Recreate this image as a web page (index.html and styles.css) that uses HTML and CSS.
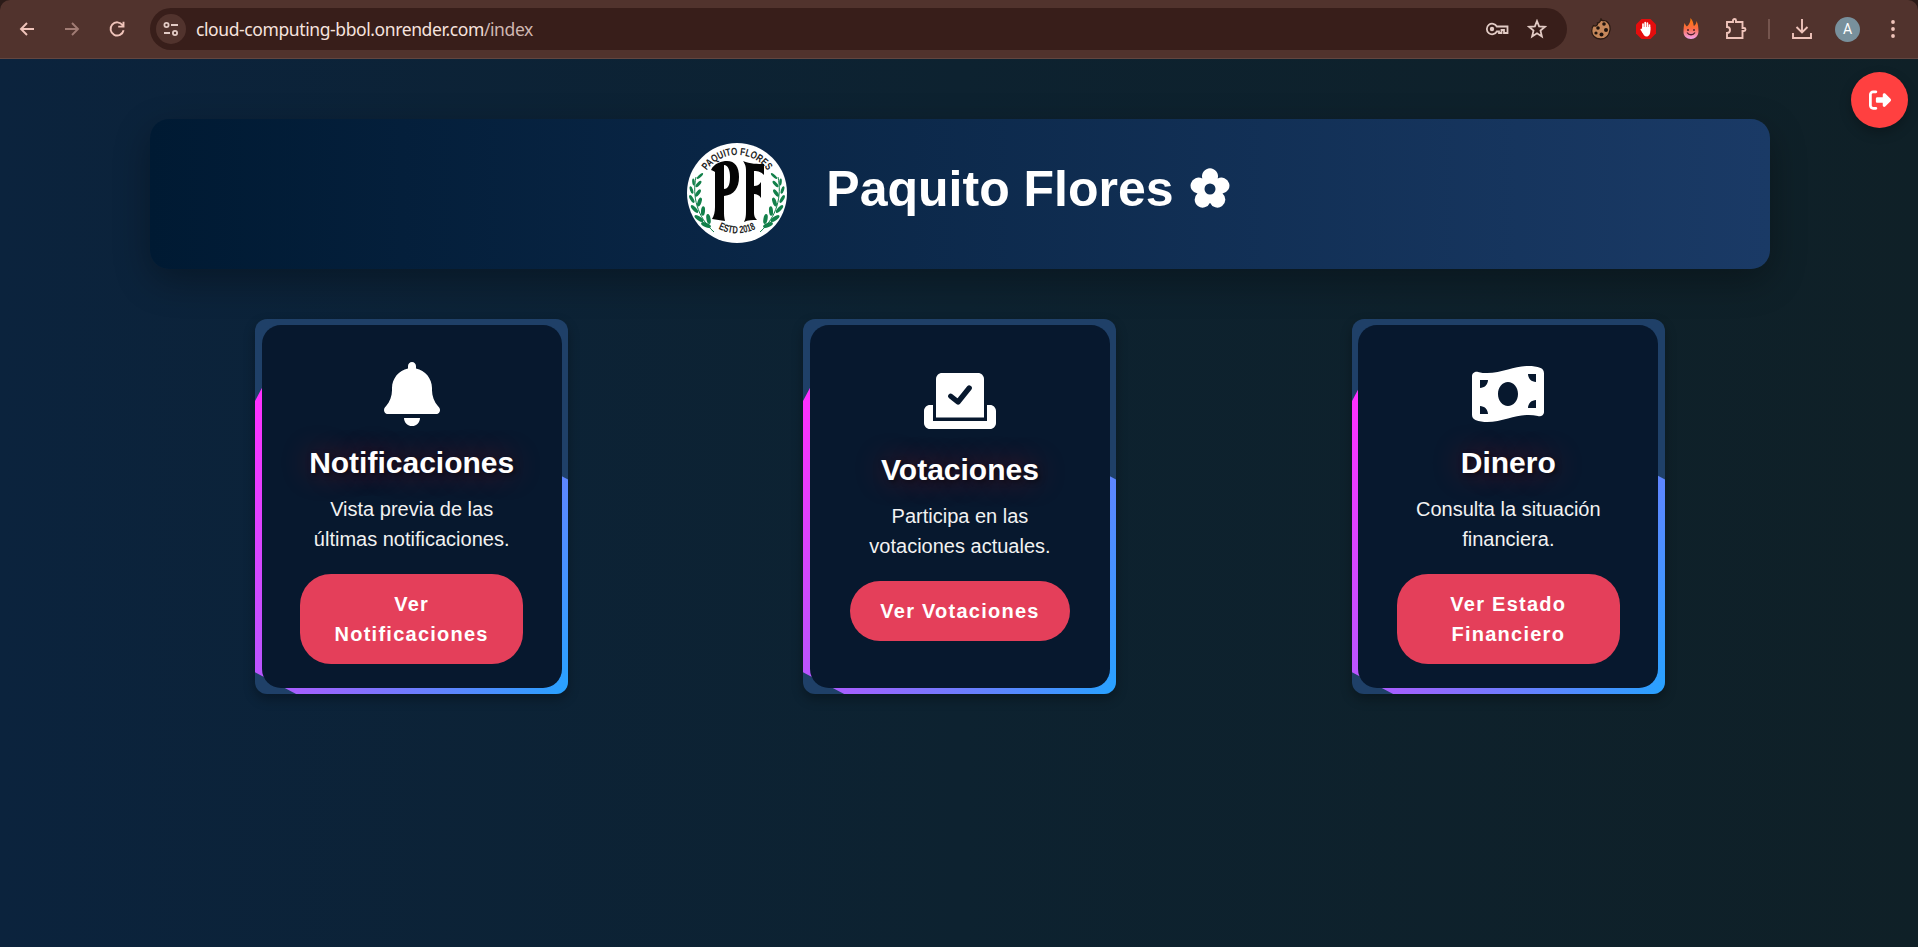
FILE: index.html
```html
<!DOCTYPE html>
<html lang="es">
<head>
<meta charset="utf-8">
<title>Paquito Flores</title>
<link rel="stylesheet" href="styles.css">
</head>
<body>
<div class="browser">
  <nav class="nav">
    <svg width="20" height="20" viewBox="0 0 20 20"><path d="M17 10H4M10 4L4 10L10 16"/></svg>
    <svg class="dim" width="20" height="20" viewBox="0 0 20 20"><path d="M3 10H16M10 4L16 10L10 16"/></svg>
    <svg width="20" height="20" viewBox="0 0 20 20"><path d="M15.600 6.200A6.600 6.600 0 1 0 16.600 11.300M16.500 2.800V7.600H11.200"/></svg>
  </nav>
  <div class="address">
    <span class="site"><svg width="18" height="18" viewBox="0 0 18 18"><circle cx="4.500" cy="5" r="2.100"/><path d="M9 5H16M2 13H8"/><circle cx="13" cy="13" r="2.100"/></svg></span>
    <span class="url">cloud-computing-bbol.onrender.com<span class="path">/index</span></span>
    <svg class="key" width="24" height="16" viewBox="0 0 24 16"><path d="M11.800 5.500H22.500V12H19V9H16.500V12H14V10.500H11.800A5.300 5.300 0 1 1 11.800 5.500Z"/><circle class="fill" cx="7" cy="8" r="2.200"/></svg>
    <svg class="star" width="20" height="20" viewBox="0 0 20 20"><path d="M10 2L12.100 7.400L18 7.800L13.500 11.600L14.900 17.400L10 14.200L5.100 17.400L6.500 11.600L2 7.800L7.900 7.400Z"/></svg>
  </div>
  <div class="tools">
    <svg width="20" height="22" viewBox="0 0 20 22"><path d="M10 1C11 4 13 2 15 3C18 5 19.500 8 19 12C18 18 14 21 9.500 21C4 21 .7 17 .7 13C.7 10 1 9 2.500 7.500C5 9 7 7 6.500 5C8 5 9.500 3 10 1Z" fill="#c4875a" stroke="#2b1a12" stroke-width="1.300"/><g fill="#1d120d" stroke="none"><circle cx="13" cy="6" r="1.800"/><circle cx="7" cy="10" r="1.800"/><circle cx="15" cy="12" r="2"/><circle cx="5" cy="15" r="1.600"/><circle cx="10.500" cy="16.500" r="2"/></g></svg>
    <svg width="22" height="22" viewBox="0 0 22 22"><path d="M6.500 1H15.500L21 6.500V15.500L15.500 21H6.500L1 15.500V6.500Z" fill="#e40d0d" stroke="none"/><path d="M8 11V6M10.200 10V4.500M12.400 10V5M14.500 12V7M6.300 11.500L8 14" stroke="#fff" stroke-width="1.700" stroke-linecap="round"/><path d="M7.200 9H15.300V13C15.300 16 14 18.500 11.500 18.500C9.500 18.500 8.200 16.500 7.200 14Z" fill="#fff" stroke="none"/></svg>
    <svg width="18" height="22" viewBox="0 0 18 22"><defs><linearGradient id="flame" x2="0" y2="1"><stop offset="0" stop-color="#ff7a00"/><stop offset=".5" stop-color="#fb6b45"/><stop offset="1" stop-color="#f5a3ef"/></linearGradient></defs><path d="M8.500 0C12 4 11 6.500 12 8C13.500 7 14.500 5 14.500 3C16 6 16.500 9 16.500 13.500C16.500 18 13 21 9 21C4.500 21 1.500 18 1.500 14C1.500 10 2 7 2.500 5C3.500 7 4 8 5 8.500C7.500 6 8.500 4 8.500 0Z" fill="url(#flame)" stroke="none"/><path d="M5 14.500C7 17.500 11 17.500 13 14.500" stroke="#4b202c" stroke-width="1.300"/><circle cx="6" cy="12" r="1" fill="#4b202c" stroke="none"/><circle cx="12" cy="12" r="1" fill="#4b202c" stroke="none"/></svg>
    <svg width="22" height="22" viewBox="0 0 22 22"><path d="M2 4H8V2.500A1.500 1.500 0 0 1 11 2.500V4H17.500V10H19A1.500 1.500 0 0 1 19 13H17.500V20H2V15C6 15 6 9 2 9Z"/></svg>
    <i class="divider"></i>
    <svg width="22" height="22" viewBox="0 0 22 22"><path d="M11 1V14M5.500 9L11 14.500L16.500 9M2 15V20H20V15"/></svg>
    <span class="avatar">A</span>
    <svg class="dots" width="6" height="20" viewBox="0 0 6 20"><circle cx="3" cy="3" r="1.900"/><circle cx="3" cy="10" r="1.900"/><circle cx="3" cy="17" r="1.900"/></svg>
  </div>
</div>
<main class="page">
  <button class="logout" aria-label="Salir"><svg width="22" height="22" viewBox="0 0 512 512"><path d="M377.900 105.900L500.700 228.700c7.200 7.200 11.300 17.100 11.300 27.300s-4.100 20.100-11.300 27.300L377.900 406.100c-6.400 6.400-15 9.900-24 9.900c-18.700 0-33.900-15.200-33.900-33.900l0-62.100-128 0c-17.700 0-32-14.300-32-32l0-64c0-17.700 14.300-32 32-32l128 0 0-62.100c0-18.700 15.200-33.900 33.900-33.900c9 0 17.600 3.600 24 9.900zM160 96L96 96c-17.700 0-32 14.300-32 32l0 256c0 17.700 14.300 32 32 32l64 0c17.700 0 32 14.300 32 32s-14.300 32-32 32l-64 0c-53 0-96-43-96-96L0 128C0 75 43 32 96 32l64 0c17.700 0 32 14.300 32 32s-14.300 32-32 32z"/></svg></button>
  <header class="hero">
    <svg class="logo" width="100" height="100" viewBox="0 0 100 100">
      <defs>
        <path id="arc-top" d="M15 36A37.500 37.500 0 0 1 85 36"/>
        <path id="arc-bottom" d="M18 75A41 41 0 0 0 82 75"/>
        <g id="laurel"><path d="M9 34C5 53 10 74 27 89" fill="none" stroke="#12804a" stroke-width="1"/>
          <g fill="#12804a"><ellipse cx="13" cy="33" rx="1.300" ry="4" transform="rotate(48 13 33)"/><ellipse cx="6.500" cy="39" rx="1.300" ry="3.600" transform="rotate(-5 6.500 39)"/><ellipse cx="11.500" cy="41" rx="1.600" ry="4" transform="rotate(42 11.500 41)"/><ellipse cx="4.500" cy="47" rx="1.500" ry="4" transform="rotate(-18 4.500 47)"/><ellipse cx="11" cy="50" rx="1.800" ry="4.300" transform="rotate(35 11 50)"/><ellipse cx="4.800" cy="56" rx="1.700" ry="4.400" transform="rotate(-30 4.800 56)"/><ellipse cx="12.500" cy="59" rx="1.900" ry="4.600" transform="rotate(20 12.500 59)"/><ellipse cx="7.500" cy="66" rx="1.900" ry="5" transform="rotate(-42 7.500 66)"/><ellipse cx="16" cy="68" rx="2" ry="4.800" transform="rotate(5 16 68)"/><ellipse cx="12" cy="75.500" rx="2" ry="5.300" transform="rotate(-55 12 75.500)"/><ellipse cx="21.500" cy="76" rx="2.100" ry="5" transform="rotate(-10 21.500 76)"/><ellipse cx="19" cy="82" rx="2.200" ry="5.200" transform="rotate(-68 19 82)"/></g></g>
      </defs>
      <circle cx="50" cy="50" r="50" fill="#fff"/>
      <use href="#laurel"/><use href="#laurel" transform="translate(100 0) scale(-1 1)"/>
      <text class="ring"><textPath href="#arc-top" startOffset="50%" textLength="71" lengthAdjust="spacingAndGlyphs">PAQUITO FLORES</textPath></text>
      <text class="ring"><textPath href="#arc-bottom" startOffset="50%" textLength="39" lengthAdjust="spacingAndGlyphs">ESTD 2018</textPath></text>
      <g fill="#050505"><path fill-rule="evenodd" d="M24 27C27 20 35 18 40 18C48 18 52 24 52 34C52 45 47 52 37 53V68C37 72 37 74 38 78L25 76C27 73 28 69 28 64V29C27 28 26 28 24 27ZM37 22V46C41 46 43 42 43 34C43 27 41 22 37 22Z"/><path d="M56 18C63 21 71 21 77 21V32C74 29 72 28 67 28V43C70 43 72 42 74 39V55C72 52 70 51 67 51V70C67 73 68 75 70 77C65 77 61 77 57 79C59 75 59 72 59 66V28C59 23 58 21 56 18Z"/></g>
    </svg>
    <h1>Paquito Flores <svg class="flower" width="42" height="42" viewBox="0 0 42 42"><path fill-rule="evenodd" d="M13.300 10.500A8 8 0 1 1 28.700 10.500A8 8 0 1 1 33.500 25.500A8 8 0 1 1 21 34.800A8 8 0 1 1 8.500 25.500A8 8 0 1 1 13.300 10.500ZM21 15.500A5.500 5.500 0 1 0 21 26.500A5.500 5.500 0 1 0 21 15.500Z"/></svg></h1>
  </header>
  <section class="cards">
    <article class="card"><div class="panel">
      <svg class="icon" width="56" height="64" viewBox="0 0 448 512"><path d="M224 0c-17.700 0-32 14.300-32 32V51.200C119 66 64 130.600 64 208v18.800c0 47-17.300 92.400-48.500 127.600l-7.400 8.300c-8.400 9.400-10.400 22.900-5.300 34.400S19.400 416 32 416H416c12.600 0 24-7.400 29.200-18.900s3.100-25-5.300-34.400l-7.400-8.300C401.300 319.200 384 273.900 384 226.800V208c0-77.400-55-142-128-156.800V32c0-17.700-14.300-32-32-32zm45.300 493.300c12-12 18.700-28.300 18.700-45.300H224 160c0 17 6.700 33.300 18.700 45.300s28.300 18.700 45.300 18.700s33.300-6.700 45.300-18.700z"/></svg>
      <h2>Notificaciones</h2>
      <p>Vista previa de las<br>últimas notificaciones.</p>
      <a class="btn wrapped">Ver<br>Notificaciones</a>
    </div></article>
    <article class="card"><div class="panel">
      <svg class="icon" width="72" height="64" viewBox="0 0 576 512"><path d="M96 80c0-26.500 21.500-48 48-48H432c26.500 0 48 21.500 48 48V388H96Z"/><path d="M0 336c0-26.500 21.500-48 48-48H72V416H504V288h24c26.500 0 48 21.500 48 48v96c0 26.500-21.500 48-48 48H48c-26.500 0-48-21.500-48-48V336z"/><path class="check" d="M214 218L272 264L362 152"/></svg>
      <h2>Votaciones</h2>
      <p>Participa en las<br>votaciones actuales.</p>
      <a class="btn single">Ver Votaciones</a>
    </div></article>
    <article class="card"><div class="panel">
      <svg class="icon" width="72" height="64" viewBox="0 0 576 512"><path d="M0 112.500V422.300c0 18 10.100 35 27 41.300c87 32.500 174 10.300 261-11.900c79.800-20.300 159.600-40.700 239.300-18.900c23 6.300 48.700-9.500 48.700-33.400V89.700c0-18-10.100-35-27-41.300C462 15.900 375 38.100 288 60.300C208.200 80.600 128.400 100.900 48.700 79.100C25.600 72.800 0 88.600 0 112.500zM288 352c-44.200 0-80-43-80-96s35.800-96 80-96s80 43 80 96s-35.800 96-80 96zM64 352c35.300 0 64 28.700 64 64H64V352zm64-208c0 35.300-28.700 64-64 64V144h64zM512 304v64H448c0-35.300 28.700-64 64-64zM448 96h64v64c-35.300 0-64-28.700-64-64z"/></svg>
      <h2>Dinero</h2>
      <p>Consulta la situación<br>financiera.</p>
      <a class="btn wrapped">Ver Estado<br>Financiero</a>
    </div></article>
  </section>
</main>
</body>
</html>
```

FILE: styles.css
```css
* { box-sizing: border-box; }
html, body { height: 100%; }
body { margin: 0; display: flex; flex-direction: column; overflow: hidden; background: #2b1b18; font-family: "Liberation Sans", Arial, sans-serif; color: #fff; }
h1, h2, p { margin: 0; }

.browser { flex: none; height: 59px; display: flex; align-items: center; background: #51332d; border-bottom: 1px solid #624640; border-radius: 10px 10px 0 0; }
.browser svg { fill: none; stroke: #f0c4ba; stroke-width: 1.9; }
.nav { width: 150px; padding-left: 17px; display: flex; gap: 25px; }
.browser .dim { opacity: .5; }
.address { width: 1417px; height: 42px; display: flex; align-items: center; border-radius: 21px; background: #381e1a; padding: 0 20px 0 6px; }
.site { width: 30px; height: 30px; border-radius: 50%; background: #51332d; display: flex; align-items: center; justify-content: center; }
.address svg { stroke: #e2cbc5; stroke-width: 1.8; }
.address .fill { fill: #e2cbc5; stroke: none; }
.url { flex: 1; margin-left: 10px; font: 17.5px/24px "Noto Sans", sans-serif; letter-spacing: -.4px; color: #f6e3df; }
.path { color: #d0b7b1; }
.key { margin-right: 18px; }
.tools { display: flex; align-items: center; flex: 1; padding-left: 24px; }
.tools svg { flex: none; }
.tools svg:nth-child(2) { margin-left: 24px; }
.tools svg:nth-child(3) { margin-left: 25px; }
.tools svg:nth-child(4) { margin-left: 25px; }
.divider { width: 2px; height: 20px; background: #75554e; margin: 0 21px 0 21px; }
.avatar { margin-left: 22px; width: 25px; height: 25px; border-radius: 50%; background: #78909c; font: 14px/25px Roboto, sans-serif; text-align: center; }
.browser .dots { margin-left: 30px; fill: #f0c4ba; stroke: none; }

.page { position: relative; flex: 1; padding: 60px 148px 0 150px; background: linear-gradient(90deg, #0b233d, #0d2230 50%, #0f2027); }
.logout { position: absolute; top: 13px; right: 10px; width: 57px; height: 56px; padding: 0; border: 0; border-radius: 50%; background: #ff4040; display: flex; align-items: center; justify-content: center; box-shadow: 0 5px 12px rgba(0,0,0,.25); }
.logout svg { fill: #fff; }

.hero { height: 150px; display: flex; align-items: center; justify-content: center; gap: 39px; padding: 0 2px 2px 0; border-radius: 19px; background: linear-gradient(90deg, #001a33, #1a3a66); box-shadow: 0 12px 36px rgba(0,0,0,.3); }
.ring { font: bold 10.5px "Liberation Sans Narrow", "Liberation Sans", sans-serif; fill: #222; text-anchor: middle; }
.hero h1 { font-size: 50px; line-height: 60px; display: flex; align-items: center; gap: 15px; padding-bottom: 9px; }
.flower { fill: #fff; }

.cards { display: grid; grid-template-columns: repeat(3, 1fr); justify-items: center; column-gap: 25px; padding-top: 50px; }
.card { position: relative; width: 313px; height: 375px; padding: 6px; overflow: hidden; border-radius: 12px; background: #1f4068; box-shadow: 0 5px 12px rgba(0,0,0,.3); }
.card::before { content: ""; position: absolute; left: 19px; top: 24px; width: 317px; height: 488px; transform: rotate(-62deg); background: linear-gradient(180deg, #ff30ff, #00b7ff); }
.panel { position: relative; width: 300px; height: 363px; margin: 0 auto; padding: 12px 38px 0; border-radius: 19px; background: #07182e; display: flex; flex-direction: column; align-items: center; justify-content: center; text-align: center; }
.icon { fill: #fff; }
.check { fill: none; stroke: #07182e; stroke-width: 42; stroke-linecap: round; stroke-linejoin: round; }
.panel h2 { margin-top: 14px; font-size: 30px; line-height: 45px; text-shadow: 2px 2px 5px rgba(0,0,0,.5), 0 0 30px rgba(255,0,0,.45); }
.panel p { margin: 9px 0 20px; font-size: 20px; line-height: 30px; color: #f2f2f2; white-space: nowrap; }
.btn { padding: 15px 30px; border-radius: 31px; background: #e43f5a; font-weight: bold; font-size: 20px; line-height: 30px; letter-spacing: 1.25px; white-space: nowrap; }
.btn.wrapped { width: 223px; }
.btn.single { margin-bottom: 15px; }
```
